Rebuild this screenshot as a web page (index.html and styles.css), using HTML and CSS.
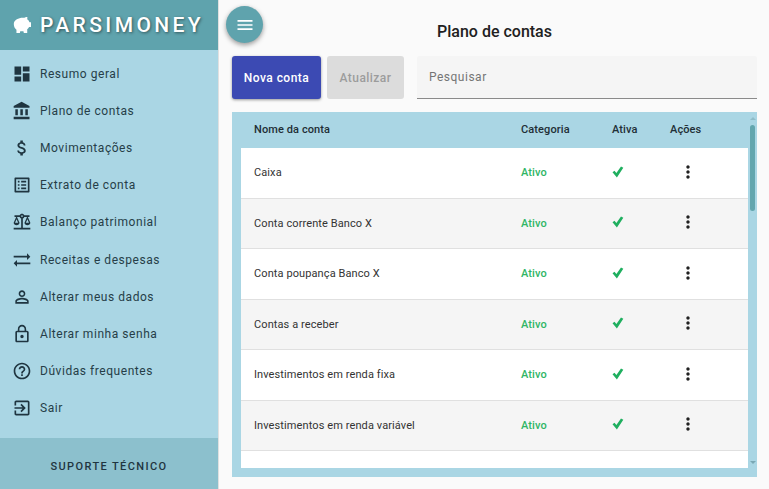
FILE: index.html
```html
<!DOCTYPE html>
<html lang="pt-BR">
<head>
    <meta charset="UTF-8">
    <meta name="viewport" content="width=device-width, initial-scale=1.0">
    <title>Parsimoney - Plano de contas</title>
    <link rel="stylesheet" href="styles.css">
</head>
<body>
    <aside class="sidebar">
        <header class="brand">
            <svg class="brand-icon" viewBox="0 0 20 18"><path d="M4 2.500C6 1 9 .5 12 .8c1.200-.8 2.600-.9 3.200-.5l-.2 2.100c1.200.8 2 1.900 2.400 3.100H19v5.200h-2c-.5 1-1.200 1.800-2 2.400V17h-3.600l-.4-1.800H7.600L7.200 17H3.600v-3.400C1.600 12 .8 9.800 .8 7.500.8 5.400 2 3.700 4 2.500z"/></svg>
            <span class="brand-name">PARSIMONEY</span>
        </header>
        <nav class="menu">
            <a class="menu-item"><svg viewBox="0 0 24 24"><path d="M3 13h8V3H3v10zm0 8h8v-6H3v6zm10 0h8V11h-8v10zm0-18v6h8V3h-8z"/></svg>Resumo geral</a>
            <a class="menu-item"><svg viewBox="0 0 24 24"><path d="M4 10v7h3v-7H4zm6 0v7h3v-7h-3zM2 22h19v-3H2v3zm14-12v7h3v-7h-3zm-4.500-9L2 6v2h19V6l-9.500-5z"/></svg>Plano de contas</a>
            <a class="menu-item"><svg viewBox="0 0 24 24"><path d="M11.800 10.900c-2.270-.59-3-1.200-3-2.150 0-1.090 1.010-1.850 2.700-1.850 1.780 0 2.440.85 2.500 2.100h2.210c-.07-1.720-1.120-3.300-3.210-3.810V3h-3v2.160c-1.940.42-3.500 1.680-3.500 3.610 0 2.310 1.910 3.460 4.700 4.130 2.500.6 3 1.480 3 2.410 0 .69-.49 1.790-2.700 1.790-2.060 0-2.870-.92-2.980-2.100h-2.200c.12 2.190 1.760 3.420 3.680 3.830V21h3v-2.150c1.950-.37 3.500-1.500 3.500-3.550 0-2.840-2.430-3.810-4.700-4.400z"/></svg>Movimentações</a>
            <a class="menu-item"><svg viewBox="0 0 24 24"><path d="M19 5v14H5V5h14m1.100-2H3.900c-.5 0-.9.4-.9.9v16.200c0 .4.4.9.9.9h16.200c.4 0 .9-.5.9-.9V3.900c0-.5-.5-.9-.9-.9zM11 7h6v2h-6V7zm0 4h6v2h-6v-2zm0 4h6v2h-6zM7 7h2v2H7zm0 4h2v2H7zm0 4h2v2H7z"/></svg>Extrato de conta</a>
            <a class="menu-item"><svg viewBox="0 0 24 24"><path d="M13 7.830c.85-.3 1.530-.98 1.830-1.830H18l-3 7c0 1.660 1.570 3 3.500 3s3.500-1.340 3.500-3l-3-7h2V4h-6.170c-.41-1.170-1.520-2-2.830-2s-2.420.83-2.830 2H3v2h2l-3 7c0 1.660 1.570 3 3.500 3S9 14.660 9 13L6 6h3.170c.3.85.98 1.530 1.830 1.830V19H2v2h20v-2h-9V7.830zM20.370 13h-3.740l1.870-4.360L20.370 13zm-13 0H3.630L5.500 8.640 7.370 13zM12 6c-.55 0-1-.45-1-1 0-.55.45-1 1-1s1 .45 1 1c0 .55-.45 1-1 1z"/></svg>Balanço patrimonial</a>
            <a class="menu-item"><svg viewBox="0 0 24 24"><path d="M18 4l4 4-4 4V9H2V7h16V4zM6 12v3h16v2H6v3l-4-4 4-4z"/></svg>Receitas e despesas</a>
            <a class="menu-item"><svg viewBox="0 0 24 24"><path d="M12 5.900c1.160 0 2.100.94 2.100 2.100s-.94 2.100-2.100 2.100S9.900 9.160 9.900 8s.94-2.100 2.100-2.100m0 9c2.970 0 6.100 1.460 6.100 2.100v1.100H5.900V17c0-.64 3.130-2.100 6.100-2.100M12 4C9.790 4 8 5.790 8 8s1.790 4 4 4 4-1.790 4-4-1.790-4-4-4zm0 9c-2.670 0-8 1.340-8 4v3h16v-3c0-2.660-5.330-4-8-4z"/></svg>Alterar meus dados</a>
            <a class="menu-item"><svg viewBox="0 0 24 24"><path d="M12 17c1.100 0 2-.9 2-2s-.9-2-2-2-2 .9-2 2 .9 2 2 2zm6-9h-1V6c0-2.760-2.240-5-5-5S7 3.240 7 6v2H6c-1.100 0-2 .9-2 2v10c0 1.100.9 2 2 2h12c1.100 0 2-.9 2-2V10c0-1.100-.9-2-2-2zM8.900 6c0-1.710 1.390-3.100 3.100-3.100s3.100 1.390 3.100 3.100v2H8.900V6zM18 20H6V10h12v10z"/></svg>Alterar minha senha</a>
            <a class="menu-item"><svg viewBox="0 0 24 24"><path d="M11 18h2v-2h-2v2zm1-16C6.480 2 2 6.480 2 12s4.480 10 10 10 10-4.480 10-10S17.520 2 12 2zm0 18c-4.410 0-8-3.590-8-8s3.590-8 8-8 8 3.590 8 8-3.590 8-8 8zm0-14c-2.210 0-4 1.790-4 4h2c0-1.100.9-2 2-2s2 .9 2 2c0 2-3 1.750-3 5h2c0-2.250 3-2.500 3-5 0-2.210-1.790-4-4-4z"/></svg>Dúvidas frequentes</a>
            <a class="menu-item"><svg viewBox="0 0 24 24"><path d="M10.090 15.590L11.500 17l5-5-5-5-1.410 1.410L12.670 11H3v2h9.670l-2.580 2.590zM19 3H5c-1.110 0-2 .9-2 2v4h2V5h14v14H5v-4H3v4c0 1.100.89 2 2 2h14c1.100 0 2-.9 2-2V5c0-1.100-.9-2-2-2z"/></svg>Sair</a>
        </nav>
        <footer class="support">SUPORTE TÉCNICO</footer>
    </aside>

    <main class="content">
        <button class="fab"><svg viewBox="0 0 24 24"><path d="M3 18h18v-2H3v2zm0-5h18v-2H3v2zm0-7v2h18V6H3z"/></svg></button>
        <h1 class="title">Plano de contas</h1>
        <div class="toolbar">
            <button class="btn btn-primary">Nova conta</button>
            <button class="btn btn-disabled">Atualizar</button>
            <input class="search" type="text" placeholder="Pesquisar">
        </div>
        <section class="panel">
            <div class="row head">
                <span>Nome da conta</span><span>Categoria</span><span>Ativa</span><span>Ações</span>
            </div>
            <div class="rows">
                <div class="row item"><span>Caixa</span><span class="cat">Ativo</span><span><svg class="check" viewBox="0 0 12 12"><path d="M.5 6.300l2-1.600 1.900 2.400L9 .4l2.300 1.300L4.900 11.600z"/></svg></span><span class="actions"><svg viewBox="0 0 24 24"><path d="M12 8c1.100 0 2-.9 2-2s-.9-2-2-2-2 .9-2 2 .9 2 2 2zm0 2c-1.100 0-2 .9-2 2s.9 2 2 2 2-.9 2-2-.9-2-2-2zm0 6c-1.100 0-2 .9-2 2s.9 2 2 2 2-.9 2-2-.9-2-2-2z"/></svg></span></div>
                <div class="row item"><span>Conta corrente Banco X</span><span class="cat">Ativo</span><span><svg class="check" viewBox="0 0 12 12"><path d="M.5 6.300l2-1.600 1.900 2.400L9 .4l2.300 1.300L4.900 11.600z"/></svg></span><span class="actions"><svg viewBox="0 0 24 24"><path d="M12 8c1.100 0 2-.9 2-2s-.9-2-2-2-2 .9-2 2 .9 2 2 2zm0 2c-1.100 0-2 .9-2 2s.9 2 2 2 2-.9 2-2-.9-2-2-2zm0 6c-1.100 0-2 .9-2 2s.9 2 2 2 2-.9 2-2-.9-2-2-2z"/></svg></span></div>
                <div class="row item"><span>Conta poupança Banco X</span><span class="cat">Ativo</span><span><svg class="check" viewBox="0 0 12 12"><path d="M.5 6.300l2-1.600 1.900 2.400L9 .4l2.300 1.300L4.900 11.600z"/></svg></span><span class="actions"><svg viewBox="0 0 24 24"><path d="M12 8c1.100 0 2-.9 2-2s-.9-2-2-2-2 .9-2 2 .9 2 2 2zm0 2c-1.100 0-2 .9-2 2s.9 2 2 2 2-.9 2-2-.9-2-2-2zm0 6c-1.100 0-2 .9-2 2s.9 2 2 2 2-.9 2-2-.9-2-2-2z"/></svg></span></div>
                <div class="row item"><span>Contas a receber</span><span class="cat">Ativo</span><span><svg class="check" viewBox="0 0 12 12"><path d="M.5 6.300l2-1.600 1.900 2.400L9 .4l2.300 1.300L4.900 11.600z"/></svg></span><span class="actions"><svg viewBox="0 0 24 24"><path d="M12 8c1.100 0 2-.9 2-2s-.9-2-2-2-2 .9-2 2 .9 2 2 2zm0 2c-1.100 0-2 .9-2 2s.9 2 2 2 2-.9 2-2-.9-2-2-2zm0 6c-1.100 0-2 .9-2 2s.9 2 2 2 2-.9 2-2-.9-2-2-2z"/></svg></span></div>
                <div class="row item"><span>Investimentos em renda fixa</span><span class="cat">Ativo</span><span><svg class="check" viewBox="0 0 12 12"><path d="M.5 6.300l2-1.600 1.900 2.400L9 .4l2.300 1.300L4.900 11.600z"/></svg></span><span class="actions"><svg viewBox="0 0 24 24"><path d="M12 8c1.100 0 2-.9 2-2s-.9-2-2-2-2 .9-2 2 .9 2 2 2zm0 2c-1.100 0-2 .9-2 2s.9 2 2 2 2-.9 2-2-.9-2-2-2zm0 6c-1.100 0-2 .9-2 2s.9 2 2 2 2-.9 2-2-.9-2-2-2z"/></svg></span></div>
                <div class="row item"><span>Investimentos em renda variável</span><span class="cat">Ativo</span><span><svg class="check" viewBox="0 0 12 12"><path d="M.5 6.300l2-1.600 1.900 2.400L9 .4l2.300 1.300L4.900 11.600z"/></svg></span><span class="actions"><svg viewBox="0 0 24 24"><path d="M12 8c1.100 0 2-.9 2-2s-.9-2-2-2-2 .9-2 2 .9 2 2 2zm0 2c-1.100 0-2 .9-2 2s.9 2 2 2 2-.9 2-2-.9-2-2-2zm0 6c-1.100 0-2 .9-2 2s.9 2 2 2 2-.9 2-2-.9-2-2-2z"/></svg></span></div>
            </div>
            <div class="scrollbar">
                <span class="arrow-up"></span>
                <span class="thumb"></span>
                <span class="arrow-down"></span>
            </div>
        </section>
    </main>
</body>
</html>
```

FILE: styles.css
```css
* {
    box-sizing: border-box;
}

body {
    display: flex;
    width: 769px;
    height: 489px;
    margin: 0;
    overflow: hidden;
    background: #fafafa;
    font-family: Roboto, sans-serif;
    color: #212121;
}

.sidebar {
    display: flex;
    flex-direction: column;
    width: 219px;
    height: 489px;
    flex-shrink: 0;
    background: #aad6e4;
    border-right: 1px solid #e0e0e0;
}

.brand {
    display: flex;
    align-items: center;
    gap: 9px;
    height: 50px;
    padding-left: 13px;
    background: #5fa3ad;
}

.brand-icon {
    width: 19px;
    height: 17px;
    fill: #fff;
}

.brand-name {
    margin-left: -1px;
    font-size: 21px;
    font-weight: 500;
    letter-spacing: 3.4px;
    color: #fff;
    text-shadow: 1px 1px 3px rgba(0, 0, 0, 0.5);
}

.menu {
    display: flex;
    flex-direction: column;
    flex: 1;
    padding-top: 5.5px;
}

.menu-item {
    display: flex;
    align-items: center;
    gap: 8px;
    height: 37.1px;
    padding-left: 12px;
    font-size: 12px;
    letter-spacing: 0.55px;
    color: #263e48;
}

.menu-item svg {
    width: 20px;
    height: 20px;
    fill: #1f3540;
}

.support {
    height: 51px;
    line-height: 57px;
    text-align: center;
    font-size: 11px;
    font-weight: 500;
    letter-spacing: 1.4px;
    color: #1f3540;
    background: #8cc0cd;
}

.content {
    position: relative;
    display: flex;
    flex-direction: column;
    flex: 1;
    padding: 0 12px 0 13px;
}

.fab {
    position: absolute;
    top: 6px;
    left: 7px;
    display: flex;
    align-items: center;
    justify-content: center;
    width: 37px;
    height: 37px;
    padding: 0;
    border: 0;
    border-radius: 50%;
    background: #5fa3ad;
    box-shadow: 0 2px 5px rgba(0, 0, 0, 0.4);
}

.fab svg {
    width: 20px;
    height: 20px;
    fill: #fff;
}

.title {
    height: 56px;
    margin: 0;
    line-height: 63px;
    text-align: center;
    font-size: 16px;
    font-weight: 500;
}

.toolbar {
    display: flex;
    height: 43px;
    margin-bottom: 13px;
}

.btn {
    height: 43px;
    padding: 0;
    border: 0;
    border-radius: 3px;
    font-family: inherit;
    font-size: 12px;
    font-weight: 500;
    letter-spacing: 0.45px;
}

.btn-primary {
    width: 89px;
    margin-right: 6px;
    color: #fff;
    background: #3c4ab3;
    box-shadow: 0 1px 3px rgba(0, 0, 0, 0.4);
}

.btn-disabled {
    width: 77px;
    margin-right: 13px;
    color: #9c9c9c;
    background: #dcdcdc;
}

.search {
    flex: 1;
    height: 43px;
    padding: 0 12px;
    border: 0;
    border-bottom: 1px solid #8a8a8a;
    border-radius: 3px 3px 0 0;
    outline: 0;
    background: #f5f5f5;
    font-family: inherit;
    font-size: 12px;
    letter-spacing: 0.5px;
}

.search::placeholder {
    color: #757575;
}

.panel {
    position: relative;
    height: 365px;
    padding: 0 9px 9px;
    background: #aad6e4;
}

.row {
    display: grid;
    grid-template-columns: 267px 91px 58px 91px;
    align-items: center;
    font-size: 11px;
    letter-spacing: 0.1px;
}

.row > span {
    padding-left: 13px;
}

.head {
    height: 36px;
    padding-bottom: 2px;
    font-weight: 500;
    color: #1f2f36;
}

.rows {
    height: 320px;
    overflow: hidden;
    background: #fff;
}

.item {
    height: 50.5px;
    border-bottom: 1px solid #e0e0e0;
    color: #333;
}

.item:nth-child(even) {
    background: #f5f5f5;
}

.cat {
    font-weight: 500;
    color: #2fb565;
}

.check {
    display: block;
    width: 12px;
    height: 12px;
    margin-top: -2px;
    fill: #1faf5f;
}

.actions svg {
    display: block;
    width: 20px;
    height: 20px;
    margin: -2px 0 0 8px;
    fill: #212121;
}

.scrollbar {
    position: absolute;
    top: 0;
    right: 0;
    bottom: 9px;
    display: flex;
    flex-direction: column;
    align-items: center;
    width: 9px;
}

.arrow-up,
.arrow-down {
    width: 0;
    height: 0;
    border-left: 3px solid transparent;
    border-right: 3px solid transparent;
}

.arrow-up {
    margin-top: 5px;
    border-bottom: 3px solid #8fbdc9;
}

.arrow-down {
    margin-top: auto;
    margin-bottom: 4px;
    border-top: 3px solid #7aa8b4;
}

.thumb {
    width: 5px;
    height: 86px;
    margin-top: 5px;
    border-radius: 3px;
    background: #63a6ae;
}
```
